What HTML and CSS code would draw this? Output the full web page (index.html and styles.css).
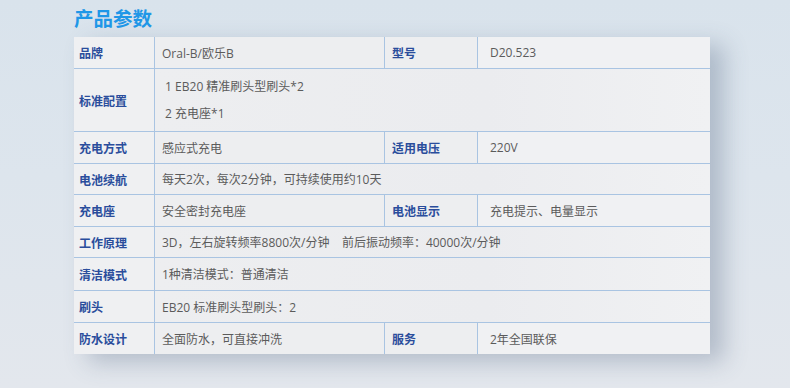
FILE: index.html
```html
<!DOCTYPE html>
<html lang="zh">
<head>
<meta charset="utf-8">
<title>产品参数</title>
<link rel="stylesheet" href="styles.css">
</head>
<body>
<div class="page">
  <h1 class="title">产品参数</h1>
  <div class="spec">
    <div class="row r1">
      <div class="lab">品牌</div>
      <div class="val">Oral-B/欧乐B</div>
      <div class="lab lab2">型号</div>
      <div class="val val2">D20.523</div>
    </div>
    <div class="row r2">
      <div class="lab">标准配置</div>
      <div class="val wide multi"><p>&nbsp;1 EB20 精准刷头型刷头*2</p><p>&nbsp;2 充电座*1</p></div>
    </div>
    <div class="row r3">
      <div class="lab">充电方式</div>
      <div class="val">感应式充电</div>
      <div class="lab lab2">适用电压</div>
      <div class="val val2">220V</div>
    </div>
    <div class="row r4">
      <div class="lab">电池续航</div>
      <div class="val wide">每天2次，每次2分钟，可持续使用约10天</div>
    </div>
    <div class="row r5">
      <div class="lab">充电座</div>
      <div class="val">安全密封充电座</div>
      <div class="lab lab2">电池显示</div>
      <div class="val val2">充电提示、电量显示</div>
    </div>
    <div class="row r6">
      <div class="lab">工作原理</div>
      <div class="val wide">3D，左右旋转频率8800次/分钟&nbsp;&nbsp;&nbsp; 前后振动频率：40000次/分钟</div>
    </div>
    <div class="row r7">
      <div class="lab">清洁模式</div>
      <div class="val wide">1种清洁模式：普通清洁</div>
    </div>
    <div class="row r8">
      <div class="lab">刷头</div>
      <div class="val wide">EB20 标准刷头型刷头：2</div>
    </div>
    <div class="row r9">
      <div class="lab">防水设计</div>
      <div class="val">全面防水，可直接冲洗</div>
      <div class="lab lab2">服务</div>
      <div class="val val2">2年全国联保</div>
    </div>
  </div>
</div>
</body>
</html>
```

FILE: styles.css
```css
html, body {
  margin: 0;
  padding: 0;
}
body {
  width: 790px;
  height: 388px;
  overflow: hidden;
  background: linear-gradient(180deg, #d9e3ec 0%, #dde5ed 45%, #e3e7ed 100%);
  font-family: "Noto Sans CJK SC", "Noto Sans", sans-serif;
}
.page {
  padding: 5px 0 0 74px;
}
.title {
  margin: 0;
  height: 32px;
  font-size: 19.5px;
  line-height: 26px;
  font-weight: 700;
  color: #1f97e7;
}
.spec {
  width: 636px;
  background: #edeef0;
  box-shadow: 14px 8px 22px rgba(70, 90, 120, 0.3);
  display: flex;
  flex-direction: column;
}
.row {
  display: grid;
  grid-template-columns: 80px 229px 92px 232px;
  column-gap: 1px;
  background: #a9c4e2;
  border-top: 1px solid #a9c4e2;
}
.r1 { border-top: 0; height: 31px; }
.r2 { height: 62px; }
.r3 { height: 31px; }
.r4 { height: 30px; }
.r5 { height: 31px; }
.r6 { height: 30px; }
.r7 { height: 32px; }
.r8 { height: 31px; }
.r9 { height: 31px; }
.lab, .val {
  display: flex;
  align-items: center;
  font-size: 12px;
  white-space: nowrap;
  background: #edeef0;
}
.row > .lab:first-child { background: #eff0f2; }
.row > .val2 { background: #f0f1f3; }
.row > .wide { background: linear-gradient(90deg, #edeef0 0%, #ebecef 60%, #f0f1f3 100%); }
.lab {
  padding-left: 5px;
  font-weight: 700;
  color: #2a4d9c;
}
.lab2 {
  padding-left: 7px;
}
.val {
  padding-left: 7px;
  color: #5b5b5b;
  font-family: "Open Sans", "Noto Sans CJK SC", sans-serif;
}
.val2 {
  padding-left: 12px;
}
.wide {
  grid-column: 2 / 5;
}
.multi {
  flex-direction: column;
  align-items: flex-start;
  justify-content: center;
  gap: 11px;
}
.multi p {
  margin: 0;
  line-height: 16px;
}
```
